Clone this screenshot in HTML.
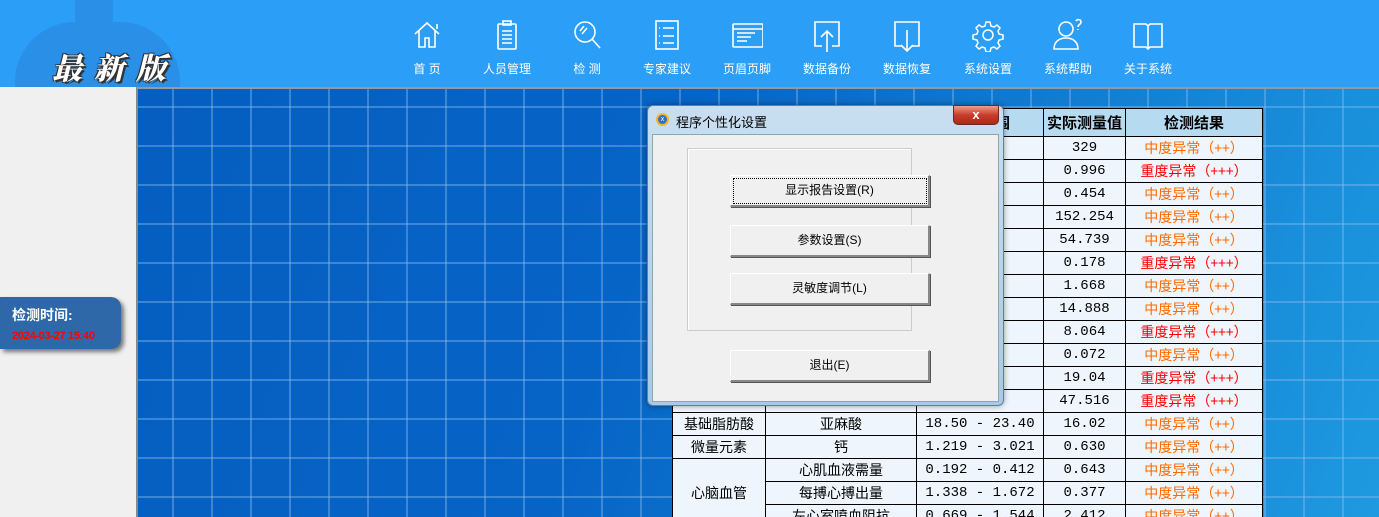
<!DOCTYPE html>
<html><head><meta charset="utf-8"><style>
*{margin:0;padding:0;box-sizing:border-box}
html{width:1379px;height:517px;overflow:hidden}
body{width:1379px;height:517px;overflow:hidden;position:relative;background:#f0f0f0;font-family:"Liberation Sans","Noto Sans CJK SC",sans-serif}
#hdr{position:absolute;left:0;top:0;width:1379px;height:87px;background:#2b9ef8;overflow:hidden}
#body-shape{position:absolute;left:15px;top:22px;width:165px;height:90px;background:#2a8fe6;border-radius:60px 60px 0 0}
#neck{position:absolute;left:75px;top:0;width:38px;height:30px;background:#2a8fe6;border-radius:0 0 10px 10px}
#logo{position:absolute;left:52px;top:44px;font-family:"Noto Serif CJK SC",serif;font-size:30px;font-weight:900;color:#fff;letter-spacing:12px;text-shadow:2px 2px 0 #333,-1px -1px 0 #333,1px -1px 0 #333,-1px 1px 0 #333;font-style:italic}
.nav{position:absolute;top:18px;width:80px;text-align:center;color:#fff;font-size:12px}
.nav svg{display:block;margin:0 auto 8px;width:32px;height:34px}
#main{position:absolute;left:136px;top:87px;width:1243px;height:430px;border-left:2px solid #888;border-top:2px solid #999;overflow:hidden;
background:linear-gradient(110deg,#055ec0 0%,#0664c6 40%,#137fd2 70%,#1e9ae0 100%)}
#grid{position:absolute;inset:0;background-image:linear-gradient(90deg,transparent 34px,rgba(140,190,240,.4) 34px,rgba(140,190,240,.4) 36px,transparent 36px),linear-gradient(0deg,transparent 37px,rgba(140,190,240,.4) 37px);background-size:39px 39px;background-position:0 0,0 -22px}
#time{position:absolute;left:0;top:297px;width:121px;height:52px;background:#2f68a8;border-radius:0 10px 10px 0;box-shadow:3px 3px 4px #777;padding:8px 0 0 12px}
#time b{display:block;color:#fff;font-size:14px}
#time i{display:block;font-style:normal;color:#f00;font-size:11px;font-weight:bold;margin-top:5px;letter-spacing:-.3px}
#tw{position:absolute;left:672px;top:108px;width:600px;height:409px;overflow:hidden}
table{border-collapse:collapse;font-family:"Liberation Mono","Noto Sans CJK SC",monospace;font-size:14px}
td{border:1px solid #000;height:23px;text-align:center;background:#eef5fc;color:#000;padding:0}
th{border:1px solid #000;height:28px;background:#b6dbf0;font-size:15px;font-family:"Noto Sans CJK SC",sans-serif}
.o{color:#ff6a00;font-family:"Noto Sans CJK SC",sans-serif}.r{color:#f00;font-family:"Noto Sans CJK SC",sans-serif}
.c{font-family:"Noto Sans CJK SC",sans-serif}
#dlg{position:absolute;left:647px;top:105px;width:357px;height:301px;border:1px solid #5a7fa8;border-radius:6px;background:linear-gradient(180deg,#c9dff0,#a9c9e6);box-shadow:0 0 6px rgba(0,0,0,.4)}
#dlg .t{position:absolute;left:28px;top:6px;font-size:13px;color:#000}
#dlg .ic{position:absolute;left:8px;top:7px;width:13px;height:13px;border-radius:50%;background:#2d6fd0;border:2px solid #f5b520;color:#fff;font-size:7px;text-align:center;line-height:9px}
#close{position:absolute;left:305px;top:-1px;width:46px;height:20px;background:linear-gradient(#e8a090,#c83c2a 50%,#b02818);border:1px solid #6b2a20;border-radius:0 0 5px 5px;color:#fff;font-weight:bold;text-align:center;font-size:13px;line-height:18px}
#cl{position:absolute;left:4px;top:28px;width:347px;height:268px;background:#f0f0f0;border:1px solid #8aa}
#grp{position:absolute;left:34px;top:13px;width:225px;height:183px;border:1px solid #ccc;box-shadow:inset 1px 1px 0 #fff}
.btn{position:absolute;left:77px;width:200px;height:32px;background:#f0f0f0;border:1px solid #fff;border-right:2px solid #888;border-bottom:2px solid #888;box-shadow:1px 1px 0 #555;font-size:12px;text-align:center;line-height:29px;color:#000}
</style></head><body>
<div id="hdr"><div id="body-shape"></div><div id="neck"></div><div id="logo">最新版</div>
<div class="nav" style="left:387px"><svg viewBox="0 0 32 34" fill="none" stroke="#fff" stroke-width="1.6"><path d="M4 16 16 5 28 16M8 13v16h6v-9h4v9h6V13M26 6v5"/></svg>首 页</div>
<div class="nav" style="left:467px"><svg viewBox="0 0 32 34" fill="none" stroke="#fff" stroke-width="1.6"><rect x="7" y="6" width="18" height="25" rx="1"/><rect x="12" y="3" width="8" height="4"/><path d="M11 13h10M11 17h10M11 21h10M11 25h10"/></svg>人员管理</div>
<div class="nav" style="left:547px"><svg viewBox="0 0 32 34" fill="none" stroke="#fff" stroke-width="1.6"><circle cx="14" cy="14" r="10"/><path d="M21 21l8 9M9 13l4-5M11 16l5-6"/></svg>检 测</div>
<div class="nav" style="left:627px"><svg viewBox="0 0 32 34" fill="none" stroke="#fff" stroke-width="1.6"><rect x="5" y="3" width="22" height="28"/><path d="M12 10h11M12 18h11M12 25h11M8 10h1M8 18h1M8 25h1"/></svg>专家建议</div>
<div class="nav" style="left:707px"><svg viewBox="0 0 32 34" fill="none" stroke="#fff" stroke-width="1.6"><rect x="2" y="6" width="30" height="23" rx="1"/><path d="M2 11h30M6 15h18M6 19h14M6 23h10"/></svg>页眉页脚</div>
<div class="nav" style="left:787px"><svg viewBox="0 0 32 34" fill="none" stroke="#fff" stroke-width="1.6"><path d="M11 28H4V4h24v24h-7M16 34V13M10 19l6-6 6 6"/></svg>数据备份</div>
<div class="nav" style="left:867px"><svg viewBox="0 0 32 34" fill="none" stroke="#fff" stroke-width="1.6"><path d="M11 28H4V4h24v24h-7M16 12v21M10 27l6 6 6-6"/></svg>数据恢复</div>
<div class="nav" style="left:948px"><svg viewBox="0 0 32 34" fill="none" stroke="#fff" stroke-width="1.5"><circle cx="16" cy="17" r="5"/><path d="M14 4h4l1 4 3 1 3-2 3 3-2 3 1 3 4 1v4l-4 1-1 3 2 3-3 3-3-2-3 1-1 4h-4l-1-4-3-1-3 2-3-3 2-3-1-3-4-1v-4l4-1 1-3-2-3 3-3 3 2 3-1z"/></svg>系统设置</div>
<div class="nav" style="left:1028px"><svg viewBox="0 0 32 34" fill="none" stroke="#fff" stroke-width="1.6"><circle cx="14" cy="11" r="7"/><path d="M2 31c0-8 6-11 12-11s12 3 12 11zM24 3c1-2 5-2 5 1s-3 2-3 5M26 11v1"/></svg>系统帮助</div>
<div class="nav" style="left:1108px"><svg viewBox="0 0 32 34" fill="none" stroke="#fff" stroke-width="1.6"><path d="M2 6h12l2 2 2-2h12v23H18l-2 2-2-2H2zM16 8v23"/></svg>关于系统</div>
</div>
<div id="main"><div id="grid"></div></div>
<div id="time"><b>检测时间:</b><i>2024-03-27 15:40</i></div>
<div id="tw"><table>
<tr><th style="width:93px"></th><th style="width:151px">检测项目</th><th style="width:127px">正常范围</th><th style="width:82px">实际测量值</th><th style="width:137px">检测结果</th></tr>
<tr><td></td><td></td><td>0</td><td>329</td><td class="o">中度异常（++）</td></tr>
<tr><td></td><td></td><td>751</td><td>0.996</td><td class="r">重度异常（+++）</td></tr>
<tr><td></td><td></td><td>313</td><td>0.454</td><td class="o">中度异常（++）</td></tr>
<tr><td></td><td></td><td>0.470</td><td>152.254</td><td class="o">中度异常（++）</td></tr>
<tr><td></td><td></td><td>.213</td><td>54.739</td><td class="o">中度异常（++）</td></tr>
<tr><td></td><td></td><td>712</td><td>0.178</td><td class="r">重度异常（+++）</td></tr>
<tr><td></td><td></td><td>017</td><td>1.668</td><td class="o">中度异常（++）</td></tr>
<tr><td></td><td></td><td>079</td><td>14.888</td><td class="o">中度异常（++）</td></tr>
<tr><td></td><td></td><td>717</td><td>8.064</td><td class="r">重度异常（+++）</td></tr>
<tr><td></td><td></td><td>691</td><td>0.072</td><td class="o">中度异常（++）</td></tr>
<tr><td></td><td></td><td>.80</td><td>19.04</td><td class="r">重度异常（+++）</td></tr>
<tr><td></td><td></td><td>.213</td><td>47.516</td><td class="r">重度异常（+++）</td></tr>
<tr><td class="c">基础脂肪酸</td><td class="c">亚麻酸</td><td>18.50 - 23.40</td><td>16.02</td><td class="o">中度异常（++）</td></tr>
<tr><td class="c">微量元素</td><td class="c">钙</td><td>1.219 - 3.021</td><td>0.630</td><td class="o">中度异常（++）</td></tr>
<tr><td class="c" rowspan="3">心脑血管</td><td class="c">心肌血液需量</td><td>0.192 - 0.412</td><td>0.643</td><td class="o">中度异常（++）</td></tr>
<tr><td class="c">每搏心搏出量</td><td>1.338 - 1.672</td><td>0.377</td><td class="o">中度异常（++）</td></tr>
<tr><td class="c">左心室喷血阻抗</td><td>0.669 - 1.544</td><td>2.412</td><td class="o">中度异常（++）</td></tr>
</table></div>
<div id="dlg"><div class="ic">x</div><div class="t">程序个性化设置</div><div id="close">x</div>
<div id="cl"><div id="grp"></div>
<div class="btn" style="top:40px;outline:1px dotted #000;outline-offset:-4px">显示报告设置(R)</div>
<div class="btn" style="top:90px">参数设置(S)</div>
<div class="btn" style="top:138px">灵敏度调节(L)</div>
<div class="btn" style="top:215px">退出(E)</div>
</div></div>
</body></html>
